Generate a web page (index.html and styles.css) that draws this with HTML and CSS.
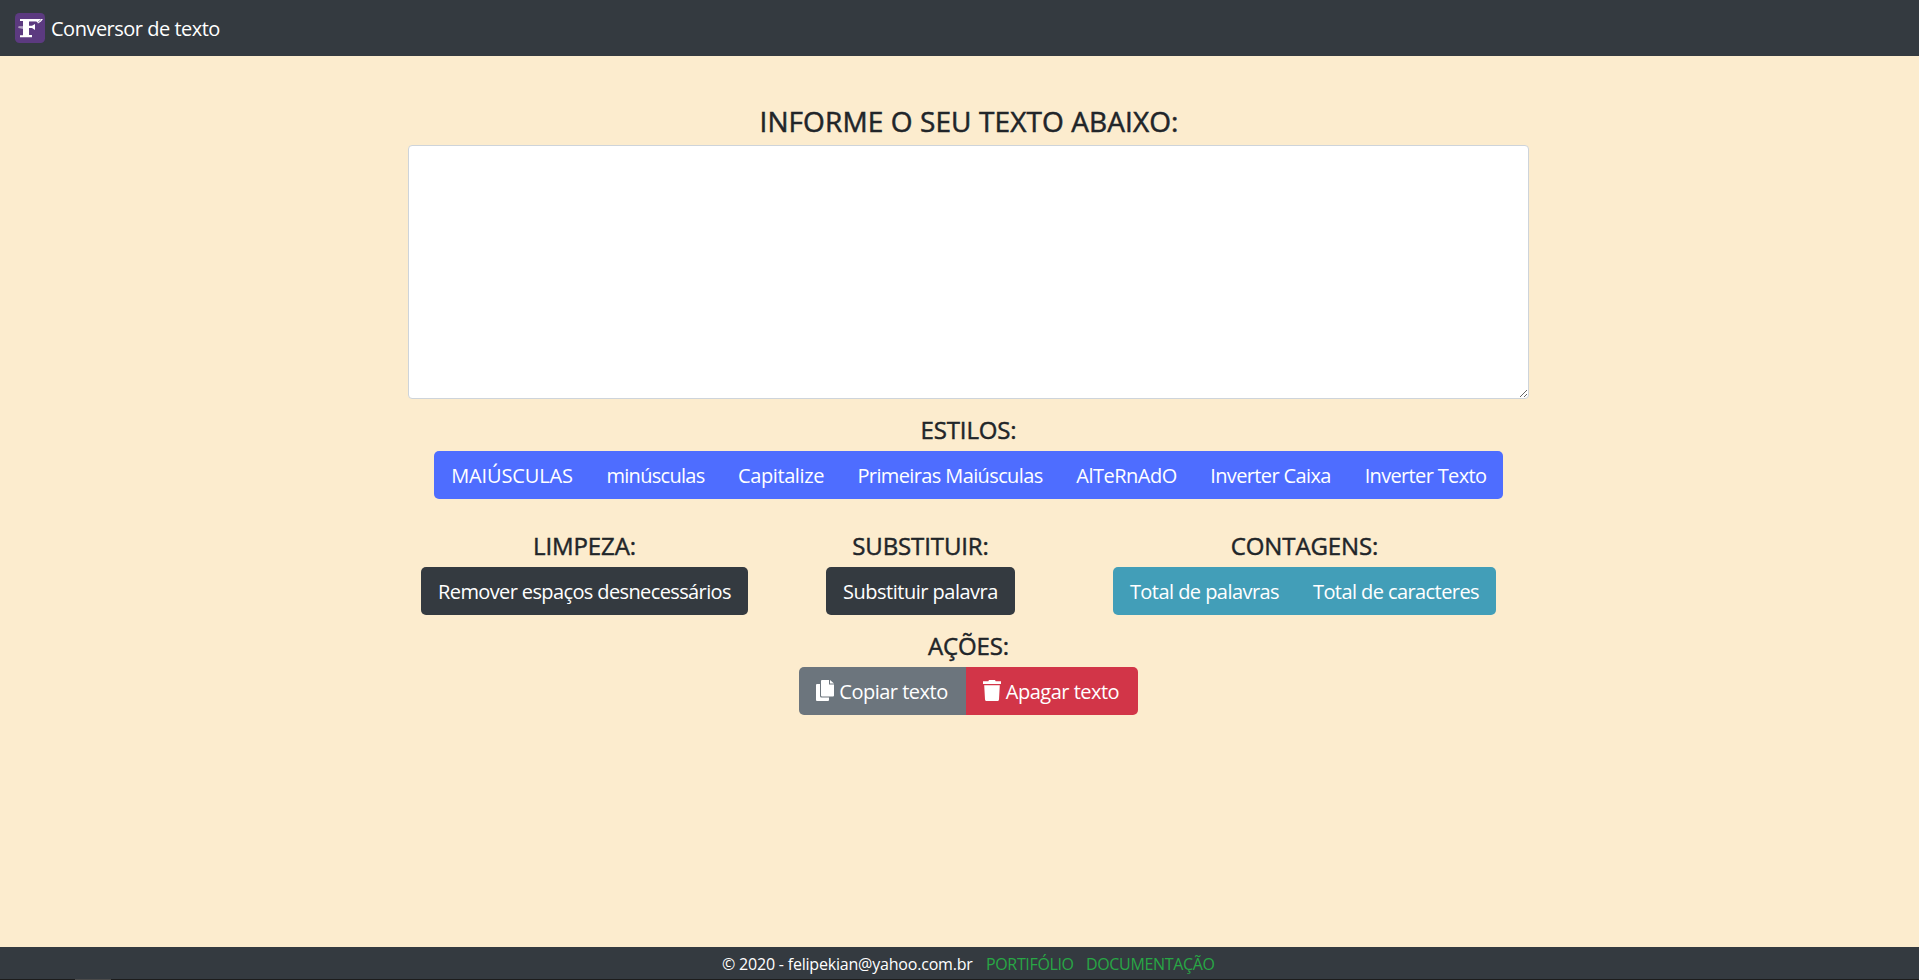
FILE: index.html
```
<!DOCTYPE html>
<html lang="pt-br">
<head>
<meta charset="utf-8">
<title>Conversor de texto</title>
<link rel="stylesheet" href="styles.css">
</head>
<body>
<header class="navbar">
  <svg class="logo" viewBox="0 0 30 30"><rect width="30" height="30" rx="4.5" fill="#5c3a80"/><path fill="#fff" d="M5 6H22L28 6 26 8.500 23 10.500 21.500 8.500H14V12.800H17L20 11V17L17 15H14V22H17V24.300H5V22.300H8V15.500L3.500 15V13.500H8V8H5Z"/><path d="M14.500 9.300H20.500M3.500 14.300H8M22.500 9.500l3.500-3" stroke="#5c3a80" stroke-width=".6" fill="none"/></svg>
  <span class="brand">Conversor de texto</span>
</header>
<main class="container">
  <h1 class="title">INFORME O SEU TEXTO ABAIXO:</h1>
  <textarea class="editor"></textarea>
  <section class="group styles">
    <h2 class="heading">ESTILOS:</h2>
    <div class="buttons blue">
      <button class="btn w-upper">MAIÚSCULAS</button><button class="btn w-lower">minúsculas</button><button class="btn w-cap">Capitalize</button><button class="btn w-first">Primeiras Maiúsculas</button><button class="btn w-alt">AlTeRnAdO</button><button class="btn w-case">Inverter Caixa</button><button class="btn w-rev">Inverter Texto</button>
    </div>
  </section>
  <div class="row">
    <section class="group clean">
      <h2 class="heading">LIMPEZA:</h2>
      <div class="buttons dark"><button class="btn w-clean">Remover espaços desnecessários</button></div>
    </section>
    <section class="group replace">
      <h2 class="heading">SUBSTITUIR:</h2>
      <div class="buttons dark"><button class="btn w-replace">Substituir palavra</button></div>
    </section>
    <section class="group count">
      <h2 class="heading">CONTAGENS:</h2>
      <div class="buttons teal"><button class="btn w-words">Total de palavras</button><button class="btn w-chars">Total de caracteres</button></div>
    </section>
  </div>
  <section class="group actions">
    <h2 class="heading">AÇÕES:</h2>
    <div class="buttons">
      <button class="btn gray w-copy"><svg class="icon" viewBox="0 0 18 21"><path fill="currentColor" d="M6 0h7v4.500h5V15.500a1 1 0 0 1-1 1H6a1 1 0 0 1-1-1V1a1 1 0 0 1 1-1ZM14 0l4 3.500h-4ZM1 4h3V16a1.500 1.500 0 0 0 1.500 1.500H13V20a1 1 0 0 1-1 1H1a1 1 0 0 1-1-1V5a1 1 0 0 1 1-1Z"/></svg><span>Copiar texto</span></button><button class="btn red w-erase"><svg class="icon" viewBox="0 0 18 21"><path fill="currentColor" d="M0 1.300h5.300L6 0h6l.7 1.300H18v2.700H0ZM1.200 5.200h15.600L16 19.500a1.600 1.600 0 0 1-1.600 1.500H3.600A1.600 1.600 0 0 1 2 19.500Z"/></svg><span>Apagar texto</span></button>
    </div>
  </section>
</main>
<footer class="footer">
  <span class="copy">© 2020 - felipekian@yahoo.com.br</span><a class="link port">PORTIFÓLIO</a><a class="link docs">DOCUMENTAÇÃO</a>
</footer>
<div class="edge"><div class="edge-mark"></div></div>
</body>
</html>
```
FILE: styles.css
```
* { box-sizing: border-box; }
body {
  margin: 0;
  height: 980px;
  display: flex;
  flex-direction: column;
  overflow: hidden;
  background: #fcecce;
  color: #212529;
  font-family: "Open Sans", "Noto Sans", sans-serif;
}
.navbar {
  height: 56px;
  flex: none;
  display: flex;
  align-items: center;
  padding-left: 15px;
  gap: 6px;
  background: #343a40;
  color: #fff;
}
.logo { width: 30px; height: 30px; }
.brand { font-size: 20px; letter-spacing: -0.5px; line-height: 30px; padding-top: 2px; white-space: nowrap; }
.container {
  width: 1121px;
  margin-left: 408px;
  flex: 1;
  padding-top: 48px;
}
.title {
  margin: 0;
  height: 41px;
  padding-left: 1px;
  font-size: 28px;
  line-height: 34px;
  font-weight: 400;
  -webkit-text-stroke: 0.5px #212529;
  letter-spacing: 0.1px;
  text-align: center;
  white-space: nowrap;
}
.editor {
  display: block;
  width: 1121px;
  height: 254px;
  border: 1px solid #ced4da;
  border-radius: 4px;
  background: #fff;
  resize: both;
}
.group { display: flex; flex-direction: column; align-items: center; }
.styles { margin-top: 16px; }
.heading {
  margin: 0;
  height: 36px;
  font-size: 24px;
  line-height: 29px;
  font-weight: 400;
  -webkit-text-stroke: 0.45px #212529;
  letter-spacing: -0.12px;
  white-space: nowrap;
}
.buttons { display: flex; height: 48px; border-radius: 5px; overflow: hidden; }
.btn {
  display: flex;
  align-items: center;
  justify-content: center;
  height: 48px;
  padding: 2px 0 0;
  border: 0;
  background: transparent;
  color: #fff;
  font: 400 20px/30px "Open Sans", "Noto Sans", sans-serif;
  letter-spacing: -0.5px;
  white-space: nowrap;
}
.blue { background: #4e6dff; }
.dark { background: #343a40; }
.teal { background: #429eb8; }
.btn.gray { background: #6c757d; }
.btn.red { background: #d23548; }
.btn.w-upper { width: 156px; letter-spacing: -0.15px; }
.btn.w-lower { width: 131px; letter-spacing: -0.7px; }
.btn.w-cap { width: 120px; letter-spacing: -0.4px; }
.btn.w-first { width: 219px; letter-spacing: -0.62px; padding-right: 1px; }
.w-alt { width: 133px; }
.btn.w-case { width: 155px; letter-spacing: -0.62px; }
.btn.w-rev { width: 155px; letter-spacing: -0.65px; }
.row { display: flex; margin-top: 32px; padding-left: 13px; }
.replace { margin-left: 78px; }
.count { margin-left: 98px; }
.btn.w-clean { width: 327px; letter-spacing: -0.62px; }
.w-replace { width: 189px; }
.btn.w-words { width: 183px; letter-spacing: -0.55px; }
.btn.w-chars { width: 200px; letter-spacing: -0.58px; }
.actions { margin-top: 16px; }
.btn.w-copy { width: 167px; gap: 5px; padding-right: 1px; }
.btn.w-erase { width: 172px; gap: 5px; padding-right: 2px; }
.icon { width: 18px; height: 21px; margin-top: -3px; }
.footer {
  height: 32px;
  flex: none;
  padding: 1px 0 0 722px;
  display: flex;
  align-items: center;
  background: #343a40;
  color: #fff;
  font-size: 16px;
  line-height: 24px;
  letter-spacing: -0.2px;
  white-space: nowrap;
}
.copy { width: 264px; }
.link { color: #28a745; letter-spacing: -0.35px; }
.port { width: 100px; }
.edge { height: 1px; flex: none; background: #1c1c1c; padding-left: 75px; }
.edge-mark { width: 36px; height: 1px; background: #4a4a4a; }
```
